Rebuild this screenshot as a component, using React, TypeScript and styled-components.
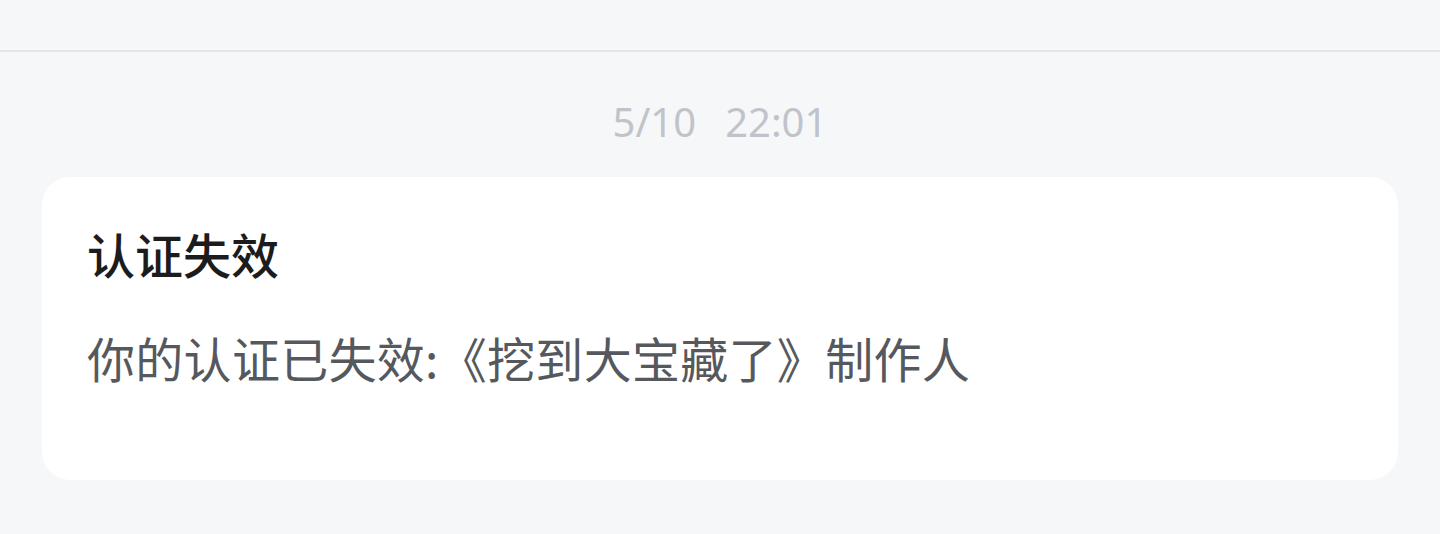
import React from "react";
import styled, { createGlobalStyle } from "styled-components";

const Global = createGlobalStyle`
  html, body { margin: 0; padding: 0; background: #f6f7f9; }
  body { font-family: "Noto Sans CJK SC", "Noto Sans", sans-serif; }
`;

const Page = styled.div`
  width: 1440px;
  height: 534px;
  background: #f6f7f9;
  display: flex;
  flex-direction: column;
  overflow: hidden;
`;

const Header = styled.div`
  height: 50px;
  border-bottom: 2px solid #e2e6ea;
  flex-shrink: 0;
`;

const Stamp = styled.div`
  display: flex;
  justify-content: center;
  gap: 29px;
  margin-top: 42px;
  font-family: "Noto Sans", sans-serif;
  font-size: 40px;
  line-height: 56px;
  color: #c0c4ca;
`;

const Card = styled.div`
  margin: 27px 42px 0;
  background: #ffffff;
  border-radius: 28px;
  padding: 43px 45px 89px;
  display: flex;
  flex-direction: column;
  gap: 37px;
`;

const Title = styled.div`
  font-size: 48px;
  line-height: 67px;
  font-weight: 500;
  color: #1c1c1c;
`;

const Body = styled.div`
  font-size: 48px;
  line-height: 67px;
  color: #55595e;
  letter-spacing: 0.3px;
`;

export default function App() {
  return (
    <Page>
      <Global />
      <Header />
      <Stamp>
        <span>5/10</span>
        <span>22:01</span>
      </Stamp>
      <Card>
        <Title>认证失效</Title>
        <Body>你的认证已失效:《挖到大宝藏了》制作人</Body>
      </Card>
    </Page>
  );
}
